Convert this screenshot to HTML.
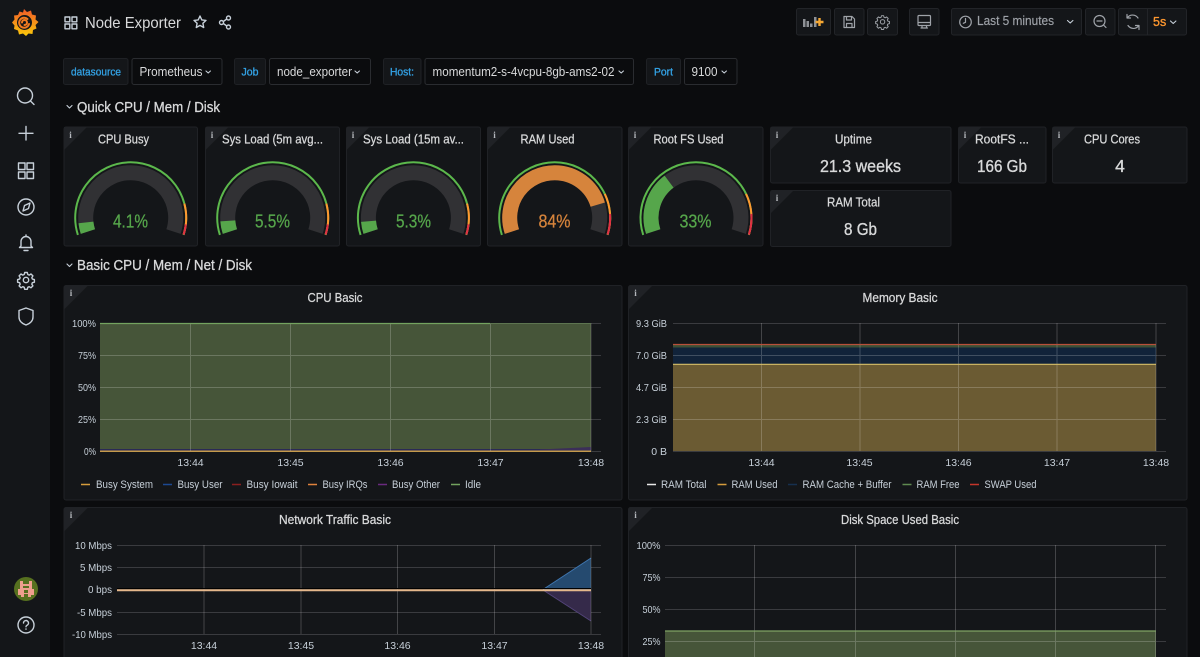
<!DOCTYPE html>
<html><head><meta charset="utf-8"><title>Node Exporter</title>
<style>
html,body{margin:0;padding:0;background:#0b0c0e;width:1200px;height:657px;overflow:hidden}
svg{display:block;font-family:"Liberation Sans",sans-serif}
.p{fill:#141619;stroke:#202226;stroke-width:1}
.t{fill:#d8d9da;font-size:12.5px;text-anchor:middle;stroke:#d8d9da;stroke-width:.25}
.a{fill:#c7d0d9;font-size:10.5px;text-anchor:middle}
.y{fill:#c7d0d9;font-size:10.5px;text-anchor:end}
.l{fill:#c7d0d9;font-size:11px}
.g{stroke:#3a3b3f;stroke-width:1}
.gv{stroke:#ffffff;stroke-opacity:.2;stroke-width:1}
.i{fill:#202226}
.it{fill:#b5b8bd;font:bold 9px "Liberation Serif",serif;text-anchor:middle}
.v{font-size:18px;text-anchor:middle;stroke-width:.25}
.s{fill:#d8d9da;font-size:17.5px;text-anchor:middle;stroke:#d8d9da;stroke-width:.35}
.ic{fill:none;stroke:#c7d0d9;stroke-width:1.4;stroke-linecap:round;stroke-linejoin:round}
.tb{fill:none;stroke:#9fa3a9;stroke-width:1.2;stroke-linecap:round;stroke-linejoin:round}
.b{fill:#141619;stroke:#222428}
.lb{fill:#141619;stroke:#1f2125}
.se{fill:#0b0c0e;stroke:#2a2c30}
.bl{fill:#33a2e5;font-size:11px;text-anchor:middle;stroke:#33a2e5;stroke-width:.3}
.sv{fill:#d8d9da;font-size:12.5px}
.ch{fill:none;stroke:#c7d0d9;stroke-width:1.1;stroke-linecap:round;stroke-linejoin:round}
.h{fill:#d8d9da;font-size:14.5px;stroke:#d8d9da;stroke-width:.3}
</style></head><body>
<svg width="1200" height="657" viewBox="0 0 1200 657" xmlns="http://www.w3.org/2000/svg">
<defs>
<linearGradient id="gr" x1="0" y1="0" x2="0" y2="1"><stop offset="0" stop-color="#f05a28"/><stop offset="1" stop-color="#fbca0a"/></linearGradient>
<g id="gear"><circle r="2.7" fill="none"/><path fill="none" d="M-1.3-7.5h2.6l.5 2 1.4.6 1.8-1.1 1.9 1.900-1.100 1.800.6 1.400 2 .5v2.600l-2 .5-.6 1.400 1.100 1.800-1.900 1.900-1.800-1.100-1.400.6-.5 2h-2.600l-.5-2-1.400-.6-1.800 1.100-1.900-1.900 1.100-1.800-.6-1.400-2-.5v-2.600l2-.5.6-1.400-1.100-1.800 1.900-1.900 1.800 1.100 1.400-.6z"/></g>
</defs>

<rect width="1200" height="657" fill="#0b0c0e"/>
<rect width="50" height="657" fill="#141619"/>

<!-- logo -->
<path fill="url(#gr)" d="M24 9l3 3 4-1.500 1 4 4 1-.5 4 3 2.500-3 3 1 3.500-3.500 1.500-.5 4-4-.5-2.500 2.500-3-2.500-4 1-1-4-4-1.500.5-3.500-2.500-3 2.500-3-.5-4 4-.5 1.500-3.500 3.500 1z"/>
<circle cx="24.500" cy="22.500" r="7.500" fill="#141619"/>
<path d="M29 24a5 5 0 1 1-1.500-5M22 22.500a2.500 2.500 0 1 1 2.500 2.500" fill="none" stroke="#f27b20" stroke-width="2" stroke-linecap="round"/>

<!-- sidebar icons -->
<g class="ic" stroke-width="1.5">
<circle cx="25" cy="95.500" r="7.500"/><path d="M30.500 101l3.500 3.500"/>
<path d="M26 126.500v13.500M19 133.300h14"/>
<rect x="18.500" y="163" width="6.500" height="6.500"/><rect x="27" y="163" width="6.500" height="6.500"/><rect x="18.500" y="172" width="6.500" height="6.500"/><rect x="27" y="172" width="6.500" height="6.500"/>
<circle cx="26" cy="207" r="8"/><path d="M30 203l-5.500 2.500-1.500 5.500 5.500-2.500z"/>
<path d="M21 246v-4.500a5 5 0 0 1 10 0V246l1.500 1.500h-13zM24 250.500h4M26 235v1.500"/>
<use href="#gear" x="26" y="280"/>
<path d="M26 308l7 2.500v6.500c0 4-3 6.500-7 8-4-1.500-7-4-7-8v-6.500z"/>
<circle cx="26" cy="625" r="8"/><path d="M23.500 623a2.500 2.500 0 1 1 3.500 2.300c-.7.400-1 .8-1 1.500M26 629v.2"/>
</g>
<circle cx="26" cy="589" r="12" fill="#56701f"/>
<path fill="#ee9f8e" d="M20 581h3v3h6v-3h3v8h2v6h-3v2h-3v-3h-4v3h-3v-2h-3v-6h2zM23 586v2h6v-2z"/>
<rect x="24" y="590" width="4" height="3" fill="#56701f"/>

<!-- top bar -->
<g class="ic" stroke="#c7d0d9" stroke-width="1.200">
<rect x="65" y="17" width="4.800" height="4.800"/><rect x="72" y="17" width="4.800" height="4.800"/><rect x="65" y="24" width="4.800" height="4.800"/><rect x="72" y="24" width="4.800" height="4.800"/>
<path d="M200 16l1.800 3.900 4.200.5-3.100 2.900.8 4.200-3.700-2.100-3.700 2.100.8-4.200-3.100-2.900 4.200-.5z"/>
<circle cx="221.500" cy="22.500" r="2"/><circle cx="228.500" cy="18" r="2"/><circle cx="228.500" cy="27" r="2"/><path d="M223.300 21.500l3.500-2.500M223.300 23.500l3.500 2.500"/>
</g>
<text x="85" y="28" fill="#d8d9da" font-size="16" textLength="96" lengthAdjust="spacingAndGlyphs">Node Exporter</text>

<!-- toolbar -->
<rect class="b" x="796.500" y="8.500" width="34" height="26.500" rx="2"/>
<rect class="b" x="834.500" y="8.500" width="29.500" height="26.500" rx="2"/>
<rect class="b" x="867.500" y="8.500" width="30" height="26.500" rx="2"/>
<rect class="b" x="909.500" y="8.500" width="29.500" height="26.500" rx="2"/>
<rect class="b" x="951.500" y="8.500" width="130" height="26.500" rx="2"/>
<rect class="b" x="1085.500" y="8.500" width="29.500" height="26.500" rx="2"/>
<rect class="b" x="1118.500" y="8.500" width="68" height="26.500" rx="2"/>
<path d="M1147.500 9v26" stroke="#222428"/>
<path fill="#8e9196" d="M803 19h2.500v8H803zM806.500 21h2.500v6h-2.500zM810 23.500h2.500V27H810zM814 17h2.500v10H814z"/>
<path d="M819.500 18v8M815.500 22h8" stroke="#f5a732" stroke-width="2.400"/>
<g class="tb">
<path d="M844 16.500h8l2.500 2.500v8.500h-10.500zM846.500 16.500v3.500h5v-3.500M846.500 27.500v-4h5.500v4"/>
<use href="#gear" x="882.500" y="22" transform="translate(158.900 3.800) scale(.82)" stroke="#9fa3a9"/>
<rect x="918" y="15.500" width="12.500" height="10" rx="1"/><path d="M918 22.500h12.500M921 28h6.500M922 25.500V28M926.500 25.500V28"/>
<circle cx="965.500" cy="22" r="5.800"/><path d="M965.500 18.500V22.300l-2.200 1"/>
<circle cx="1099.500" cy="21" r="5.500"/><path d="M1097 21h5M1103.500 25l2.500 2.500"/>
<path d="M1138 18a6.500 6.500 0 0 0-10.500-.5M1128 25.500a6.500 6.500 0 0 0 10.500.5M1127 14.500v3.500h3.500M1139 29.500v-4h-3.500"/>
</g>
<text x="977" y="25" fill="#9fa3a9" font-size="12.500" textLength="77" lengthAdjust="spacingAndGlyphs" stroke="#9fa3a9" stroke-width=".15">Last 5 minutes</text>
<path class="ch" d="M1067.500 20.500l2.700 2.500 2.700-2.500M1170.500 21l2.700 2.500 2.700-2.500" stroke="#9fa3a9"/>
<text x="1153" y="26" fill="#ff9830" font-size="12.500" stroke="#ff9830" stroke-width=".3">5s</text>

<!-- variables -->
<rect class="lb" x="63.500" y="58.500" width="64.500" height="26" rx="2"/>
<rect class="se" x="132" y="58.500" width="90" height="26" rx="2"/>
<rect class="lb" x="234.500" y="58.500" width="31" height="26" rx="2"/>
<rect class="se" x="269.500" y="58.500" width="101" height="26" rx="2"/>
<rect class="lb" x="383.500" y="58.500" width="37.500" height="26" rx="2"/>
<rect class="se" x="425" y="58.500" width="208.500" height="26" rx="2"/>
<rect class="lb" x="646.500" y="58.500" width="34" height="26" rx="2"/>
<rect class="se" x="684.500" y="58.500" width="52.500" height="26" rx="2"/>
<text class="bl" x="96" y="75.500" textLength="50" lengthAdjust="spacingAndGlyphs">datasource</text>
<text class="bl" x="250" y="75.500" textLength="17" lengthAdjust="spacingAndGlyphs">Job</text>
<text class="bl" x="402" y="75.500" textLength="24" lengthAdjust="spacingAndGlyphs">Host:</text>
<text class="bl" x="663.500" y="75.500" textLength="19" lengthAdjust="spacingAndGlyphs">Port</text>
<text class="sv" x="139.500" y="76" textLength="63" lengthAdjust="spacingAndGlyphs">Prometheus</text>
<text class="sv" x="277" y="76" textLength="75" lengthAdjust="spacingAndGlyphs">node_exporter</text>
<text class="sv" x="432.500" y="76" textLength="182" lengthAdjust="spacingAndGlyphs">momentum2-s-4vcpu-8gb-ams2-02</text>
<text class="sv" x="691.500" y="76" textLength="26" lengthAdjust="spacingAndGlyphs">9100</text>
<path class="ch" d="M206 71l2.200 2 2.200-2M355 71l2.200 2 2.200-2M619 71l2.200 2 2.200-2M722 71l2.200 2 2.200-2"/>

<!-- section headers -->
<path class="ch" d="M67 105.500l2.500 2.500 2.500-2.500M67 264l2.500 2.500 2.500-2.500" stroke-width="1.300"/>
<text class="h" x="77" y="112" textLength="143" lengthAdjust="spacingAndGlyphs">Quick CPU / Mem / Disk</text>
<text class="h" x="77" y="270" textLength="175" lengthAdjust="spacingAndGlyphs">Basic CPU / Mem / Net / Disk</text>

<!-- stat panels -->
<rect class="p" x="64" y="127" width="133.500" height="119" rx="2"/>
<rect class="p" x="205.500" y="127" width="134" height="119" rx="2"/>
<rect class="p" x="346.500" y="127" width="134" height="119" rx="2"/>
<rect class="p" x="487.500" y="127" width="134.500" height="119" rx="2"/>
<rect class="p" x="628.500" y="127" width="134.500" height="119" rx="2"/>
<rect class="p" x="770.500" y="127" width="180.500" height="56" rx="2"/>
<rect class="p" x="958.500" y="127" width="87.500" height="56" rx="2"/>
<rect class="p" x="1052.500" y="127" width="134.500" height="56" rx="2"/>
<rect class="p" x="770.500" y="190.500" width="180.500" height="56" rx="2"/>
<g class="i">
<path d="M64 127h23l-23 23zM205.500 127h23l-23 23zM346.500 127h23l-23 23zM487.500 127h23l-23 23zM628.500 127h23l-23 23zM770.500 127h23l-23 23zM958.500 127h23l-23 23zM1052.500 127h23l-23 23zM770.500 190.500h23l-23 23z"/>
</g>

<rect class="p" x="64" y="285.500" width="558" height="214.500" rx="2"/>
<rect class="p" x="628.500" y="285.500" width="558.500" height="214.500" rx="2"/>
<rect class="p" x="64" y="507.500" width="558" height="160" rx="2"/>
<rect class="p" x="628.500" y="507.500" width="558.500" height="160" rx="2"/>
<g class="i"><path d="M64.500 286h23l-23 23zM629 286h23l-23 23zM64.500 508h23l-23 23zM629 508h23l-23 23z"/></g>
<g class="it">
<text x="70.500" y="138">i</text><text x="212" y="138">i</text><text x="353" y="138">i</text><text x="494.500" y="138">i</text><text x="635" y="138">i</text><text x="777" y="138">i</text><text x="965" y="138">i</text><text x="1059" y="138">i</text><text x="777" y="201">i</text>
<text x="71" y="296">i</text><text x="635.500" y="296">i</text><text x="71" y="518">i</text><text x="635.500" y="518">i</text>
</g>

<text class="t" x="123.500" y="143.500" textLength="51" lengthAdjust="spacingAndGlyphs">CPU Busy</text>
<text class="t" x="272.500" y="143.500" textLength="101" lengthAdjust="spacingAndGlyphs">Sys Load (5m avg...</text>
<text class="t" x="413.500" y="143.500" textLength="101" lengthAdjust="spacingAndGlyphs">Sys Load (15m av...</text>
<text class="t" x="547.500" y="143.500" textLength="54" lengthAdjust="spacingAndGlyphs">RAM Used</text>
<text class="t" x="688.500" y="143.500" textLength="70" lengthAdjust="spacingAndGlyphs">Root FS Used</text>
<text class="t" x="853.500" y="143.500" textLength="37" lengthAdjust="spacingAndGlyphs">Uptime</text>
<text class="t" x="1002" y="143.500" textLength="54" lengthAdjust="spacingAndGlyphs">RootFS ...</text>
<text class="t" x="1112" y="143.500" textLength="56" lengthAdjust="spacingAndGlyphs">CPU Cores</text>
<text class="t" x="853.500" y="206.500" textLength="53" lengthAdjust="spacingAndGlyphs">RAM Total</text>
<text class="s" x="860.500" y="172" textLength="81" lengthAdjust="spacingAndGlyphs">21.3 weeks</text>
<text class="s" x="1002" y="172" textLength="50" lengthAdjust="spacingAndGlyphs">166 Gb</text>
<text class="s" x="1120" y="172">4</text>
<text class="s" x="860.500" y="235" textLength="33" lengthAdjust="spacingAndGlyphs">8 Gb</text>

<!-- gauges -->
<g fill="none">
<g transform="translate(130.700 217.700)">
<path d="M-42.800 13.900A45 45 0 1 1 42.800 13.900" stroke="#313134" stroke-width="15"/>
<path d="M-42.800 13.900A45 45 0 1 1 42.800 13.900" pathLength="216" stroke="#56a64b" stroke-width="15" stroke-dasharray="12 300"/>
<path d="M-52.800 17.200A55.500 55.500 0 1 1 52.800 17.200" pathLength="100" stroke="#5cb84c" stroke-width="2"/>
<path d="M-52.800 17.200A55.500 55.500 0 1 1 52.800 17.200" pathLength="100" stroke="#ff9830" stroke-width="2" stroke-dasharray="0 85 15 100"/>
<path d="M-52.800 17.200A55.500 55.500 0 1 1 52.800 17.200" pathLength="100" stroke="#e02f44" stroke-width="2" stroke-dasharray="0 95 5 100"/>
</g>
<g transform="translate(272.700 217.700)">
<path d="M-42.800 13.900A45 45 0 1 1 42.800 13.900" stroke="#313134" stroke-width="15"/>
<path d="M-42.800 13.900A45 45 0 1 1 42.800 13.900" pathLength="216" stroke="#56a64b" stroke-width="15" stroke-dasharray="14 300"/>
<path d="M-52.800 17.200A55.500 55.500 0 1 1 52.800 17.200" pathLength="100" stroke="#5cb84c" stroke-width="2"/>
<path d="M-52.800 17.200A55.500 55.500 0 1 1 52.800 17.200" pathLength="100" stroke="#ff9830" stroke-width="2" stroke-dasharray="0 85 15 100"/>
<path d="M-52.800 17.200A55.500 55.500 0 1 1 52.800 17.200" pathLength="100" stroke="#e02f44" stroke-width="2" stroke-dasharray="0 95 5 100"/>
</g>
<g transform="translate(413.400 217.700)">
<path d="M-42.800 13.900A45 45 0 1 1 42.800 13.900" stroke="#313134" stroke-width="15"/>
<path d="M-42.800 13.900A45 45 0 1 1 42.800 13.900" pathLength="216" stroke="#56a64b" stroke-width="15" stroke-dasharray="13.500 300"/>
<path d="M-52.800 17.200A55.500 55.500 0 1 1 52.800 17.200" pathLength="100" stroke="#5cb84c" stroke-width="2"/>
<path d="M-52.800 17.200A55.500 55.500 0 1 1 52.800 17.200" pathLength="100" stroke="#ff9830" stroke-width="2" stroke-dasharray="0 85 15 100"/>
<path d="M-52.800 17.200A55.500 55.500 0 1 1 52.800 17.200" pathLength="100" stroke="#e02f44" stroke-width="2" stroke-dasharray="0 95 5 100"/>
</g>
<g transform="translate(554.700 217.700)">
<path d="M-42.800 13.900A45 45 0 1 1 42.800 13.900" stroke="#313134" stroke-width="15"/>
<path d="M-42.800 13.900A45 45 0 1 1 42.800 13.900" pathLength="216" stroke="#d6843c" stroke-width="15" stroke-dasharray="181.400 300"/>
<path d="M-52.800 17.200A55.500 55.500 0 1 1 52.800 17.200" pathLength="100" stroke="#5cb84c" stroke-width="2"/>
<path d="M-52.800 17.200A55.500 55.500 0 1 1 52.800 17.200" pathLength="100" stroke="#ff9830" stroke-width="2" stroke-dasharray="0 80 20 100"/>
<path d="M-52.800 17.200A55.500 55.500 0 1 1 52.800 17.200" pathLength="100" stroke="#e02f44" stroke-width="2" stroke-dasharray="0 90 10 100"/>
</g>
<g transform="translate(696 217.700)">
<path d="M-42.800 13.900A45 45 0 1 1 42.800 13.900" stroke="#313134" stroke-width="15"/>
<path d="M-42.800 13.900A45 45 0 1 1 42.800 13.900" pathLength="216" stroke="#56a64b" stroke-width="15" stroke-dasharray="71.300 300"/>
<path d="M-52.800 17.200A55.500 55.500 0 1 1 52.800 17.200" pathLength="100" stroke="#5cb84c" stroke-width="2"/>
<path d="M-52.800 17.200A55.500 55.500 0 1 1 52.800 17.200" pathLength="100" stroke="#ff9830" stroke-width="2" stroke-dasharray="0 80 20 100"/>
<path d="M-52.800 17.200A55.500 55.500 0 1 1 52.800 17.200" pathLength="100" stroke="#e02f44" stroke-width="2" stroke-dasharray="0 90 10 100"/>
</g>
</g>
<g fill="#56a64b" stroke="#56a64b">
<text class="v" x="130.500" y="227.500" textLength="35" lengthAdjust="spacingAndGlyphs">4.1%</text>
<text class="v" x="272.500" y="227.500" textLength="35" lengthAdjust="spacingAndGlyphs">5.5%</text>
<text class="v" x="413.500" y="227.500" textLength="35" lengthAdjust="spacingAndGlyphs">5.3%</text>
<text class="v" x="695.500" y="227.500" textLength="32" lengthAdjust="spacingAndGlyphs">33%</text>
</g>
<text class="v" x="554.500" y="227.500" textLength="32" lengthAdjust="spacingAndGlyphs" fill="#d6843c" stroke="#d6843c">84%</text>

<!-- titles of graphs -->
<text class="t" x="335" y="302" textLength="55" lengthAdjust="spacingAndGlyphs">CPU Basic</text>
<text class="t" x="900" y="302" textLength="75" lengthAdjust="spacingAndGlyphs">Memory Basic</text>
<text class="t" x="335" y="524" textLength="112" lengthAdjust="spacingAndGlyphs">Network Traffic Basic</text>
<text class="t" x="900" y="524" textLength="118" lengthAdjust="spacingAndGlyphs">Disk Space Used Basic</text>

<!-- CPU Basic -->
<path class="g" d="M100 323.500H601M100 355.500H601M100 387.500H601M100 419.500H601M100 451.500H601"/>
<rect x="100" y="323" width="491" height="128" fill="#465539"/>
<rect x="100" y="449" width="491" height="1.500" fill="#2a2a55"/>
<path d="M540 449.500L591 447V450H540z" fill="#3b2e58"/>
<rect x="100" y="450.500" width="491" height="1.500" fill="#c59a4b"/>
<path class="gv" d="M100 355.500H591M100 387.500H591M100 419.500H591M190.500 323V451M290.500 323V451M390.500 323V451M490.500 323V451M591 323V451"/>
<path d="M100 323.500H490" stroke="#73a35f" stroke-width="1.300"/>
<path d="M490 323.500H591" stroke="#5d7450" stroke-width="1"/>
<g class="y"><text x="96" y="327" textLength="24" lengthAdjust="spacingAndGlyphs">100%</text><text x="96" y="359" textLength="18" lengthAdjust="spacingAndGlyphs">75%</text><text x="96" y="391" textLength="18" lengthAdjust="spacingAndGlyphs">50%</text><text x="96" y="423" textLength="18" lengthAdjust="spacingAndGlyphs">25%</text><text x="96" y="455" textLength="12" lengthAdjust="spacingAndGlyphs">0%</text></g>
<g class="a"><text x="190.500" y="466">13:44</text><text x="290.500" y="466">13:45</text><text x="390.500" y="466">13:46</text><text x="490.500" y="466">13:47</text><text x="591" y="466">13:48</text></g>
<g stroke-width="1.500">
<path d="M81 484.500h9" stroke="#d69c3c"/><path d="M163 484.500h9" stroke="#1f60c4" stroke-opacity=".7"/><path d="M232 484.500h9" stroke="#8a1f1f"/><path d="M308 484.500h9" stroke="#e0823c"/><path d="M378 484.500h9" stroke="#6a2a80"/><path d="M451 484.500h9" stroke="#73a35f"/>
</g>
<g class="l"><text x="96" y="488" textLength="57" lengthAdjust="spacingAndGlyphs">Busy System</text><text x="177.500" y="488" textLength="45" lengthAdjust="spacingAndGlyphs">Busy User</text><text x="246.500" y="488" textLength="51" lengthAdjust="spacingAndGlyphs">Busy Iowait</text><text x="322.500" y="488" textLength="45" lengthAdjust="spacingAndGlyphs">Busy IRQs</text><text x="392" y="488" textLength="48" lengthAdjust="spacingAndGlyphs">Busy Other</text><text x="465" y="488" textLength="16" lengthAdjust="spacingAndGlyphs">Idle</text></g>

<!-- Memory Basic -->
<path class="g" d="M673 323.500H1166M673 355.500H1166M673 387.500H1166M673 419.500H1166M673 451.500H1166"/>
<rect x="673" y="347" width="483" height="17.500" fill="#11233a"/>
<rect x="673" y="345" width="483" height="2.500" fill="#3d5036"/>
<rect x="673" y="364" width="483" height="87" fill="#6b5b33"/>
<path class="gv" d="M761.500 323V451M860 323V451M958.500 323V451M1057 323V451M1156 323V451M673 355.500H1156M673 387.500H1156M673 419.500H1156"/>
<path d="M673 344.500H1156" stroke="#b8503a" stroke-width="1.200"/>
<path d="M673 364.300H1156" stroke="#d6bf6a" stroke-width="1.200"/>
<g class="y"><text x="667" y="327" textLength="31" lengthAdjust="spacingAndGlyphs">9.3 GiB</text><text x="667" y="359" textLength="31" lengthAdjust="spacingAndGlyphs">7.0 GiB</text><text x="667" y="391" textLength="31" lengthAdjust="spacingAndGlyphs">4.7 GiB</text><text x="667" y="423" textLength="31" lengthAdjust="spacingAndGlyphs">2.3 GiB</text><text x="667" y="455">0 B</text></g>
<g class="a"><text x="761.500" y="466">13:44</text><text x="859.500" y="466">13:45</text><text x="958.500" y="466">13:46</text><text x="1057" y="466">13:47</text><text x="1156" y="466">13:48</text></g>
<g stroke-width="1.500">
<path d="M647 484.500h9" stroke="#e8e8e8"/><path d="M717.500 484.500h9" stroke="#d69c3c"/><path d="M788 484.500h9" stroke="#16304f"/><path d="M902.500 484.500h9" stroke="#5f8a50"/><path d="M970 484.500h9" stroke="#c4352a"/>
</g>
<g class="l"><text x="661" y="488" textLength="45.500" lengthAdjust="spacingAndGlyphs">RAM Total</text><text x="731.500" y="488" textLength="46" lengthAdjust="spacingAndGlyphs">RAM Used</text><text x="802.500" y="488" textLength="89" lengthAdjust="spacingAndGlyphs">RAM Cache + Buffer</text><text x="916.500" y="488" textLength="43" lengthAdjust="spacingAndGlyphs">RAM Free</text><text x="984.500" y="488" textLength="52" lengthAdjust="spacingAndGlyphs">SWAP Used</text></g>

<!-- Network -->
<path class="g" d="M117 545.500H601M117 567.500H601M117 612.500H601M117 634.500H601"/>
<path d="M543 589.500L591 558V589.500z" fill="#254a6f"/>
<path d="M543 590L591 621V590z" fill="#352a4a"/>
<path d="M543 589.500L591 558" stroke="#3f76b0" fill="none"/>
<path d="M543 590L591 621" stroke="#53447a" fill="none"/>
<path class="gv" d="M204 545V634M301 545V634M397.500 545V634M494.500 545V634M591 545V634"/>
<path d="M117 588.500H591" stroke="#000" stroke-width="1"/>
<path d="M117 590.300H591" stroke="#e5b88c" stroke-width="2"/>
<g class="y"><text x="112" y="549" textLength="37" lengthAdjust="spacingAndGlyphs">10 Mbps</text><text x="112" y="571" textLength="32" lengthAdjust="spacingAndGlyphs">5 Mbps</text><text x="112" y="593" textLength="24" lengthAdjust="spacingAndGlyphs">0 bps</text><text x="112" y="616" textLength="35" lengthAdjust="spacingAndGlyphs">-5 Mbps</text><text x="112" y="638" textLength="40" lengthAdjust="spacingAndGlyphs">-10 Mbps</text></g>
<g class="a"><text x="204" y="649">13:44</text><text x="301" y="649">13:45</text><text x="397.500" y="649">13:46</text><text x="494.500" y="649">13:47</text><text x="591" y="649">13:48</text></g>

<!-- Disk -->
<path class="g" d="M665 545.500H1166M665 577.500H1166M665 609.500H1166M665 641.500H1166"/>
<rect x="665" y="631" width="491" height="26" fill="#465539"/>
<path class="gv" d="M754.500 545V657M855.500 545V657M955.500 545V657M1055.500 545V657M1155.500 545V657M665 641.500H1156"/>
<path d="M665 631H1156" stroke="#7fa366" stroke-width="1.200"/>
<g class="y"><text x="660.500" y="549" textLength="24" lengthAdjust="spacingAndGlyphs">100%</text><text x="660.500" y="581" textLength="18" lengthAdjust="spacingAndGlyphs">75%</text><text x="660.500" y="613" textLength="18" lengthAdjust="spacingAndGlyphs">50%</text><text x="660.500" y="645" textLength="18" lengthAdjust="spacingAndGlyphs">25%</text></g>
</svg>
</body></html>
